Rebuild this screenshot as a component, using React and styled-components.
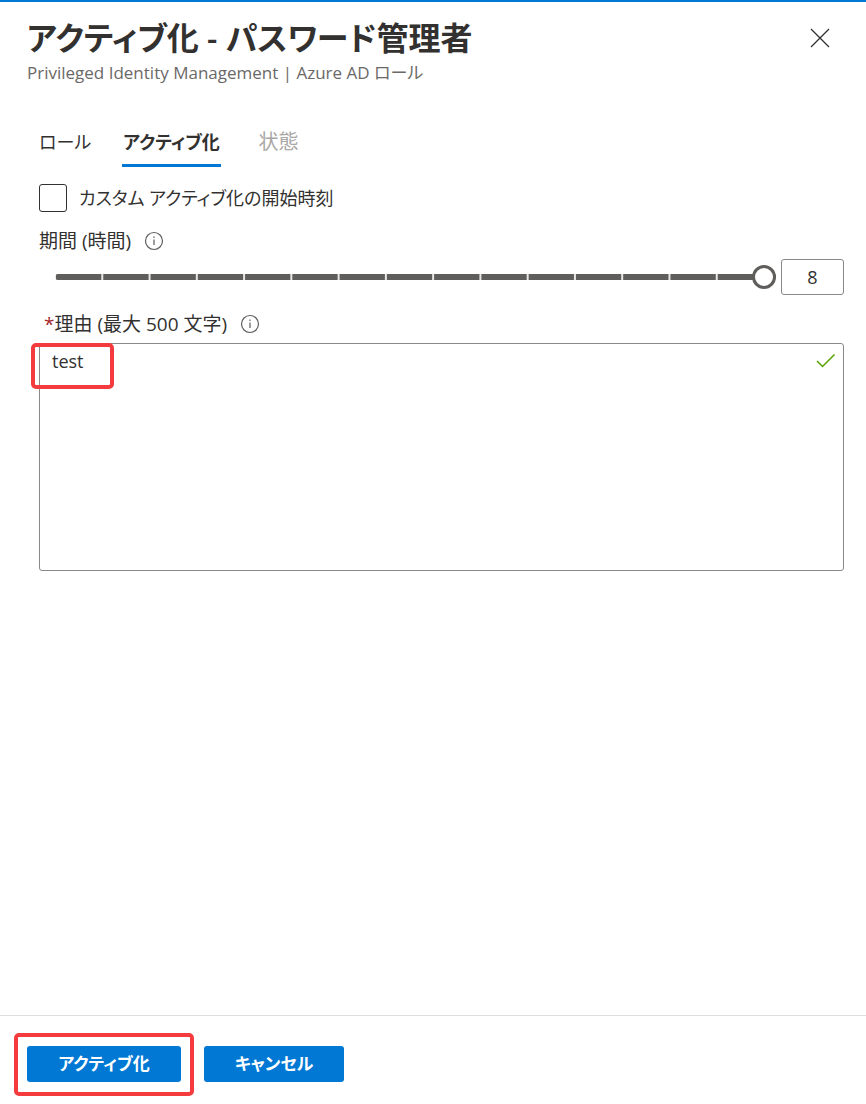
import React, { useState } from "react";
import styled, { createGlobalStyle, css } from "styled-components";

const GlobalStyle = createGlobalStyle`
  *, *::before, *::after { box-sizing: border-box; }
  body {
    margin: 0;
    background: #fff;
    color: #323130;
    font-family: "Open Sans", "Noto Sans CJK JP", sans-serif;
    font-size: 18px;
    line-height: 24px;
    font-feature-settings: "palt";
  }
  button, input, textarea { font: inherit; font-feature-settings: inherit; color: inherit; }
`;

const Panel = styled.div`
  display: flex;
  flex-direction: column;
  min-height: 100vh;
  border-top: 2px solid #0078d4;
`;

const Header = styled.header`
  display: flex;
  justify-content: space-between;
  align-items: flex-start;
  padding: 12px 32px 0 27px;
`;

const Title = styled.h1`
  margin: 0;
  font-size: 32px;
  line-height: 47px;
  font-weight: 600;
`;

const Subtitle = styled.p`
  margin: 0;
  font-size: 17px;
  color: #6b6967;
`;

const CloseButton = styled.button`
  display: flex;
  align-items: center;
  justify-content: center;
  width: 28px;
  height: 28px;
  margin-top: 10px;
  padding: 0;
  border: 0;
  background: none;
`;

const Main = styled.main`
  flex: 1;
  padding: 43px 22px 0 39px;
`;

const Tabs = styled.div`
  display: flex;
  gap: 37px;
`;

const Tab = styled.button`
  width: ${(p) => p.$width};
  height: 39px;
  padding: 0 0 9px;
  border: 0;
  border-bottom: 3px solid transparent;
  background: none;
  font-size: 18px;
  line-height: 26px;
  white-space: nowrap;
  ${(p) => p.$active && css`
    border-bottom-color: #0078d4;
    font-weight: 600;
  `}
  &:disabled { color: #a9a7a5; font-size: 20px; }
`;

const CheckRow = styled.label`
  display: flex;
  align-items: center;
  gap: 12px;
  margin-top: 17px;
`;

const Checkbox = styled.input`
  appearance: none;
  width: 28px;
  height: 28px;
  margin: 0;
  border: 1px solid #323130;
  border-radius: 3px;
  background: #fff;
  &:checked { background: #0078d4; }
`;

const LabelRow = styled.div`
  display: flex;
  align-items: center;
  gap: 13px;
  margin-top: 17px;
  font-size: 19px;
`;

const Required = styled.span`
  margin-left: 5px;
  color: #a4262c;
`;

const SliderRow = styled.div`
  display: flex;
  align-items: center;
  gap: 5px;
  margin-top: 6px;
  padding-left: 16px;
`;

const Slider = styled.input`
  appearance: none;
  flex: 1;
  min-width: 0;
  height: 24px;
  margin: 0;
  background: none;
  &::-webkit-slider-runnable-track {
    height: 6px;
    border-radius: 3px;
    background: linear-gradient(to right, #605e5c calc(100% - 2px), #e8e8e8 calc(100% - 2px)) 1px 0 / calc((100% - 12px) / 15) 100% repeat-x #605e5c;
  }
  &::-webkit-slider-thumb {
    appearance: none;
    width: 24px;
    height: 24px;
    margin-top: -9px;
    border: 3px solid #605e5c;
    border-radius: 50%;
    background: #fff;
  }
`;

const ValueBox = styled.input`
  width: 63px;
  height: 36px;
  padding: 0;
  border: 1px solid #8a8886;
  border-radius: 3px;
  text-align: center;
`;

const ReasonField = styled.div`
  position: relative;
  margin-top: 7px;
`;

const Reason = styled.textarea`
  display: block;
  width: 100%;
  height: 228px;
  padding: 5px 40px 5px 12px;
  border: 1px solid #8a8886;
  border-radius: 3px;
  background: #fff;
  resize: none;
`;

const ValidMark = styled.svg`
  position: absolute;
  top: 10px;
  right: 8px;
`;

const Highlight = styled.span`
  position: absolute;
  top: ${(p) => p.$top};
  left: ${(p) => p.$left};
  width: ${(p) => p.$width};
  height: ${(p) => p.$height};
  border: 4px solid #f43b3e;
  border-radius: 5px;
  pointer-events: none;
`;

const Footer = styled.footer`
  display: flex;
  gap: 23px;
  padding: 30px 27px 22px;
  border-top: 1px solid #e1dfdd;
`;

const ButtonSlot = styled.div`
  position: relative;
`;

const ActionButton = styled.button`
  width: ${(p) => p.$width};
  height: 36px;
  padding: 0;
  border: 0;
  border-radius: 3px;
  background: #0078d4;
  color: #fff;
  font-size: 17px;
  font-weight: 600;
`;

function InfoIcon() {
  return (
    <svg width="20" height="20" viewBox="0 0 20 20" fill="none" stroke="#605e5c" aria-hidden="true">
      <circle cx="10" cy="10" r="8.5" strokeWidth="1.2" />
      <path d="M10 8.5v5.5M10 5.5v1.5" strokeWidth="1.2" />
    </svg>
  );
}

export default function App() {
  const [hours, setHours] = useState("8");
  const [reason, setReason] = useState("test");

  return (
    <Panel>
      <GlobalStyle />
      <Header>
        <div>
          <Title>アクティブ化 - パスワード管理者</Title>
          <Subtitle>Privileged Identity Management | Azure AD ロール</Subtitle>
        </div>
        <CloseButton aria-label="閉じる">
          <svg width="20" height="20" viewBox="0 0 20 20" fill="none" stroke="#323130" strokeWidth="1.3">
            <path d="M1 1l18 18M19 1L1 19" />
          </svg>
        </CloseButton>
      </Header>
      <Main>
        <Tabs role="tablist">
          <Tab role="tab" $width="46px">ロール</Tab>
          <Tab role="tab" $width="99px" aria-selected="true" $active>アクティブ化</Tab>
          <Tab role="tab" $width="41px" disabled>状態</Tab>
        </Tabs>
        <CheckRow>
          <Checkbox type="checkbox" />
          カスタム アクティブ化の開始時刻
        </CheckRow>
        <LabelRow>
          <label htmlFor="duration">期間 (時間)</label>
          <InfoIcon />
        </LabelRow>
        <SliderRow>
          <Slider
            id="duration"
            type="range"
            min="0.5"
            max="8"
            step="0.5"
            value={hours}
            onChange={(e) => setHours(e.target.value)}
          />
          <ValueBox aria-label="時間" value={hours} onChange={(e) => setHours(e.target.value)} />
        </SliderRow>
        <LabelRow>
          <label htmlFor="reason">
            <Required>*</Required>理由 (最大 500 文字)
          </label>
          <InfoIcon />
        </LabelRow>
        <ReasonField>
          <Reason id="reason" value={reason} onChange={(e) => setReason(e.target.value)} />
          <ValidMark width="20" height="16" viewBox="0 0 20 16" fill="none" stroke="#57a300" strokeWidth="1.5">
            <path d="M1 8l5.500 5.500L18.500 1.500" />
          </ValidMark>
          <Highlight $top="0" $left="-8px" $width="83px" $height="46px" />
        </ReasonField>
      </Main>
      <Footer>
        <ButtonSlot>
          <ActionButton $width="154px">アクティブ化</ActionButton>
          <Highlight $top="-13px" $left="-13px" $width="180px" $height="63px" />
        </ButtonSlot>
        <ActionButton $width="140px">キャンセル</ActionButton>
      </Footer>
    </Panel>
  );
}
